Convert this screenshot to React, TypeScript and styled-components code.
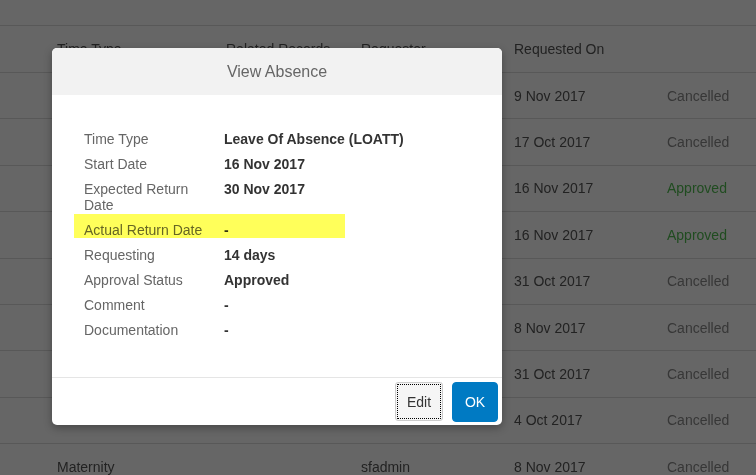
import React from "react";
import styled, { createGlobalStyle } from "styled-components";

const Global = createGlobalStyle`
  html, body { margin: 0; padding: 0; height: 100%; overflow: hidden; background: #fff; }
  body { font-family: "Liberation Sans", Arial, Helvetica, sans-serif; }
  #root { height: 100%; }
  * { box-sizing: border-box; }
`;

const Page = styled.div`
  position: relative;
  width: 100%;
  height: 100%;
  overflow: hidden;
  background: #fff;
`;

const TopBar = styled.div`
  height: 26px;
  border-bottom: 1px solid #dcdcdc;
`;

const TableRow = styled.div<{ $head?: boolean }>`
  display: grid;
  grid-template-columns: 169px 135px 153px 153px 1fr;
  align-items: center;
  padding-left: 57px;
  height: ${(p) => (p.$head ? "47px" : "46.4px")};
  border-bottom: 1px solid #dcdcdc;
  font-size: 14px;
  color: #555;
  white-space: nowrap;
`;

const Cell = styled.div<{ $status?: "Approved" | "Cancelled" }>`
  color: ${(p) =>
    p.$status === "Approved" ? "#52bd52" : p.$status === "Cancelled" ? "#8a8a8a" : "#555"};
`;

const Backdrop = styled.div`
  position: absolute;
  inset: 0;
  background: rgba(0, 0, 0, 0.6);
`;

const Modal = styled.div`
  position: absolute;
  left: 52px;
  top: 48px;
  width: 450px;
  height: 377px;
  background: #fff;
  border-radius: 5px;
  overflow: hidden;
  display: flex;
  flex-direction: column;
  box-shadow: 0 3px 9px rgba(0, 0, 0, 0.3);
`;

const ModalHeader = styled.div`
  height: 47px;
  flex: none;
  background: #f2f2f2;
  display: flex;
  align-items: center;
  justify-content: center;
  font-size: 16px;
  color: #666;
`;

const ModalBody = styled.div`
  flex: 1;
  padding: 36px 32px 0 32px;
  display: flex;
  flex-direction: column;
  gap: 9px;
`;

const Field = styled.div<{ $highlight?: boolean }>`
  position: relative;
  display: grid;
  grid-template-columns: 130px 1fr;
  column-gap: 10px;
  font-size: 14px;
  line-height: 16px;
  ${(p) =>
    p.$highlight &&
    `
    &::before {
      content: "";
      position: absolute;
      top: -8px;
      bottom: 0;
      left: -10px;
      width: 271px;
      background: rgb(255, 255, 90);
      mix-blend-mode: multiply;
    }
  `}
`;

const Label = styled.div`
  color: #666;
`;

const Value = styled.div`
  color: #333;
  font-weight: bold;
`;

const ModalFooter = styled.div`
  height: 48px;
  flex: none;
  border-top: 1px solid #e5e5e5;
  display: flex;
  align-items: center;
  justify-content: flex-end;
  gap: 9px;
  padding-right: 4px;
`;

const Button = styled.button<{ $primary?: boolean }>`
  font-family: inherit;
  font-size: 14px;
  height: ${(p) => (p.$primary ? "40px" : "39px")};
  width: ${(p) => (p.$primary ? "46px" : "48px")};
  padding: 0;
  border-radius: ${(p) => (p.$primary ? "4px" : "3px")};
  border: 1px solid ${(p) => (p.$primary ? "#007ac3" : "#cccccc")};
  background: ${(p) => (p.$primary ? "#007ac3" : "#f5f5f5")};
  color: ${(p) => (p.$primary ? "#fff" : "#333")};
  outline: ${(p) => (p.$primary ? "none" : "1px dotted #000")};
  outline-offset: -3px;
  cursor: pointer;
`;

type Row = { type: string; related: string; requester: string; on: string; status: "Approved" | "Cancelled" };

const rows: Row[] = [
  { type: "", related: "", requester: "", on: "9 Nov 2017", status: "Cancelled" },
  { type: "", related: "", requester: "", on: "17 Oct 2017", status: "Cancelled" },
  { type: "", related: "", requester: "", on: "16 Nov 2017", status: "Approved" },
  { type: "", related: "", requester: "", on: "16 Nov 2017", status: "Approved" },
  { type: "", related: "", requester: "", on: "31 Oct 2017", status: "Cancelled" },
  { type: "", related: "", requester: "", on: "8 Nov 2017", status: "Cancelled" },
  { type: "", related: "", requester: "", on: "31 Oct 2017", status: "Cancelled" },
  { type: "", related: "", requester: "", on: "4 Oct 2017", status: "Cancelled" },
  { type: "Maternity", related: "", requester: "sfadmin", on: "8 Nov 2017", status: "Cancelled" },
];

const details: { label: string; value: string; highlight?: boolean }[] = [
  { label: "Time Type", value: "Leave Of Absence (LOATT)" },
  { label: "Start Date", value: "16 Nov 2017" },
  { label: "Expected Return Date", value: "30 Nov 2017" },
  { label: "Actual Return Date", value: "-", highlight: true },
  { label: "Requesting", value: "14 days" },
  { label: "Approval Status", value: "Approved" },
  { label: "Comment", value: "-" },
  { label: "Documentation", value: "-" },
];

export default function App() {
  return (
    <Page>
      <Global />
      <TopBar />
      <TableRow $head>
        <Cell>Time Type</Cell>
        <Cell>Related Records</Cell>
        <Cell>Requester</Cell>
        <Cell>Requested On</Cell>
        <Cell />
      </TableRow>
      {rows.map((r, i) => (
        <TableRow key={i}>
          <Cell>{r.type}</Cell>
          <Cell>{r.related}</Cell>
          <Cell>{r.requester}</Cell>
          <Cell>{r.on}</Cell>
          <Cell $status={r.status}>{r.status}</Cell>
        </TableRow>
      ))}
      <Backdrop />
      <Modal role="dialog" aria-label="View Absence">
        <ModalHeader>View Absence</ModalHeader>
        <ModalBody>
          {details.map((d) => (
            <Field key={d.label} $highlight={d.highlight}>
              <Label>{d.label}</Label>
              <Value>{d.value}</Value>
            </Field>
          ))}
        </ModalBody>
        <ModalFooter>
          <Button>Edit</Button>
          <Button $primary>OK</Button>
        </ModalFooter>
      </Modal>
    </Page>
  );
}
